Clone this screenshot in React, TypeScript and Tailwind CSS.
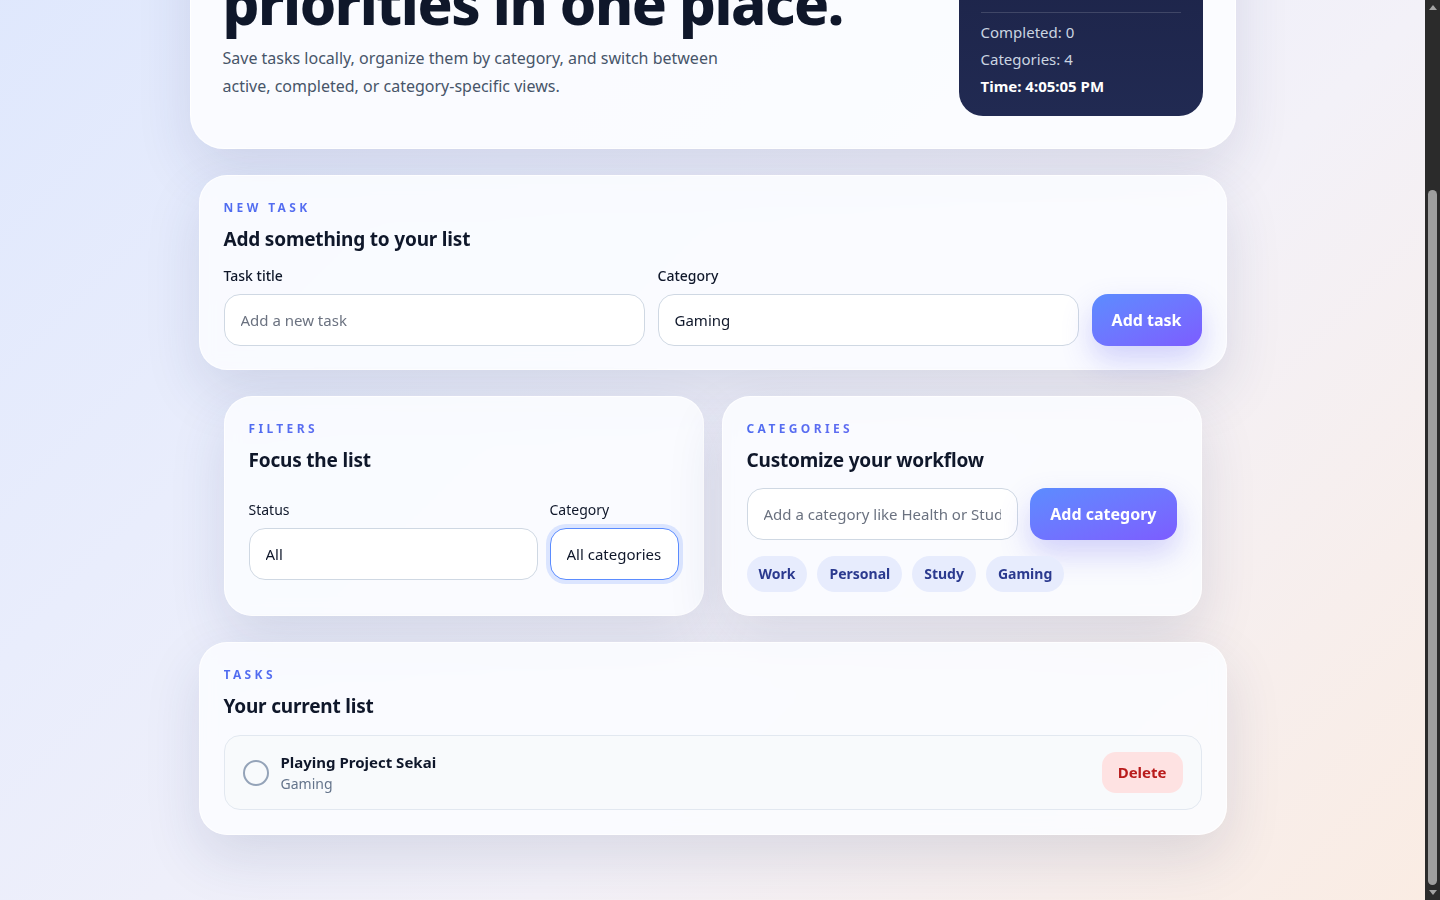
import React, { useEffect, useMemo, useRef, useState } from 'react';

type Task = { id: number; title: string; category: string; done: boolean };

const INITIAL_CATEGORIES = ['Work', 'Personal', 'Study', 'Gaming'];
const INITIAL_TASKS: Task[] = [{ id: 1, title: 'Playing Project Sekai', category: 'Gaming', done: false }];

const card =
  'rounded-[28px] border border-white/80 bg-[#fbfcff]/90 px-6 pt-6 shadow-[0_22px_55px_rgba(40,52,110,0.13)] backdrop-blur';
const field =
  'h-[52px] w-full rounded-2xl border border-[#cfd8e3] bg-white px-4 text-[15px] text-[#0f172a] outline-none placeholder:text-[#6b7280] focus:border-[#5b8cff] focus:ring-4 focus:ring-[#dbe5ff]';
const primaryBtn =
  'h-[52px] shrink-0 rounded-2xl bg-gradient-to-br from-[#5b8cff] to-[#7c5cff] px-5 text-base font-bold text-white shadow-[0_14px_30px_rgba(99,102,241,0.28)]';

function Eyebrow({ children }: { children: React.ReactNode }) {
  return (
    <p className="mb-[9px] bg-gradient-to-r from-[#4f6cf0] to-[#8b6cf6] bg-clip-text text-xs leading-4 font-bold tracking-[0.28em] text-transparent uppercase">
      {children}
    </p>
  );
}

function SectionTitle({ children }: { children: React.ReactNode }) {
  return <h2 className="text-[19px] leading-7 font-bold tracking-[-0.01em] text-[#0f172a]">{children}</h2>;
}

function Arrow({ up }: { up?: boolean }) {
  return (
    <div className="flex h-[15px] items-center justify-center">
      <svg width="8" height="5" viewBox="0 0 8 5">
        <polygon points={up ? '0,5 4,0 8,5' : '0,0 8,0 4,5'} fill="#a3a3a3" />
      </svg>
    </div>
  );
}

export default function App() {
  const [tasks, setTasks] = useState<Task[]>(INITIAL_TASKS);
  const [categories, setCategories] = useState<string[]>(INITIAL_CATEGORIES);
  const [title, setTitle] = useState('');
  const [taskCategory, setTaskCategory] = useState('Gaming');
  const [newCategory, setNewCategory] = useState('');
  const [status, setStatus] = useState('all');
  const [categoryFilter, setCategoryFilter] = useState('all');
  const [thumb, setThumb] = useState({ top: 0, size: 1 });
  const scroller = useRef<HTMLDivElement>(null);

  const syncThumb = () => {
    const el = scroller.current;
    if (!el) return;
    setThumb({ top: el.scrollTop / el.scrollHeight, size: el.clientHeight / el.scrollHeight });
  };

  useEffect(() => {
    const el = scroller.current;
    if (el) el.scrollTop = el.scrollHeight;
    syncThumb();
  }, []);

  const completed = tasks.filter((t) => t.done).length;

  const visible = useMemo(
    () =>
      tasks.filter((t) => {
        if (status === 'active' && t.done) return false;
        if (status === 'completed' && !t.done) return false;
        if (categoryFilter !== 'all' && t.category !== categoryFilter) return false;
        return true;
      }),
    [tasks, status, categoryFilter]
  );

  const addTask = () => {
    if (!title.trim()) return;
    setTasks((prev) => [...prev, { id: Date.now(), title: title.trim(), category: taskCategory, done: false }]);
    setTitle('');
  };

  const addCategory = () => {
    const name = newCategory.trim();
    if (!name || categories.includes(name)) return;
    setCategories((prev) => [...prev, name]);
    setNewCategory('');
  };

  return (
    <div className="flex h-screen font-['Noto_Sans','Open_Sans',sans-serif] text-[#0f172a]">
      <div ref={scroller} onScroll={syncThumb} className="flex-1 overflow-y-scroll">
        <div className="min-h-full bg-[linear-gradient(135deg,#dce6fd_0%,#e9edfc_35%,#f3f1f8_65%,#faece3_100%)] pt-10 pb-[65px]">
          <div className="mx-auto flex w-[1046px] flex-col gap-[26px]">
            {/* hero */}
            <header className="flex items-end justify-between gap-8 rounded-[34px] border border-white/80 bg-[#fbfcff]/95 p-8 shadow-[0_22px_55px_rgba(40,52,110,0.12)]">
              <div className="mb-4">
                <Eyebrow>Task dashboard</Eyebrow>
                <h1 className="mt-4 text-[58px] leading-[1.05] font-extrabold tracking-[-0.025em] text-[#0f172a]">
                  All your daily
                  <br />
                  priorities in one place.
                </h1>
                <p className="mt-[10px] max-w-[520px] text-base leading-7 text-[#475569]">
                  Save tasks locally, organize them by category, and switch between active, completed, or
                  category-specific views.
                </p>
              </div>
              <aside className="w-[244px] shrink-0 rounded-3xl bg-gradient-to-b from-[#1a2043] to-[#212a52] px-[22px] pt-4 pb-4 text-[15px] leading-[27px] text-[#cbd5e1]">
                <p className="text-xs leading-4 font-bold tracking-[0.25em] text-[#a5b4fc] uppercase">Snapshot</p>
                <p className="mt-2 mb-[6px] text-2xl leading-8 font-bold text-white">Today</p>
                <p>Total tasks: {tasks.length}</p>
                <p>Active: {tasks.length - completed}</p>
                <p>Filter: All</p>
                <div className="my-[6px] h-px bg-white/15" />
                <p>Completed: {completed}</p>
                <p>Categories: {categories.length}</p>
                <p className="font-bold text-white">Time: 4:05:05 PM</p>
              </aside>
            </header>

            {/* new task */}
            <section className={`${card} mx-[9px] pb-[23px]`}>
              <Eyebrow>New task</Eyebrow>
              <SectionTitle>Add something to your list</SectionTitle>
              <div className="mt-[13px] grid grid-cols-[1fr_1fr_auto] items-end gap-x-[13px]">
                <label className="flex flex-col gap-2">
                  <span className="text-sm leading-5 font-medium">Task title</span>
                  <input
                    className={field}
                    placeholder="Add a new task"
                    value={title}
                    onChange={(e) => setTitle(e.target.value)}
                  />
                </label>
                <label className="flex flex-col gap-2">
                  <span className="text-sm leading-5 font-medium">Category</span>
                  <select
                    className={`${field} appearance-none`}
                    value={taskCategory}
                    onChange={(e) => setTaskCategory(e.target.value)}
                  >
                    {categories.map((c) => (
                      <option key={c}>{c}</option>
                    ))}
                  </select>
                </label>
                <button className={primaryBtn} onClick={addTask}>
                  Add task
                </button>
              </div>
            </section>

            <div className="mx-[34px] grid grid-cols-2 gap-[18px]">
              {/* filters */}
              <section className={`${card} pb-[23px]`}>
                <Eyebrow>Filters</Eyebrow>
                <SectionTitle>Focus the list</SectionTitle>
                <div className="mt-[26px] grid grid-cols-[1fr_auto] gap-x-3">
                  <label className="flex flex-col gap-2">
                    <span className="text-sm leading-5">Status</span>
                    <select className={`${field} appearance-none`} value={status} onChange={(e) => setStatus(e.target.value)}>
                      <option value="all">All</option>
                      <option value="active">Active</option>
                      <option value="completed">Completed</option>
                    </select>
                  </label>
                  <label className="flex flex-col gap-2">
                    <span className="text-sm leading-5">Category</span>
                    <select
                      autoFocus
                      className={`${field} appearance-none`}
                      value={categoryFilter}
                      onChange={(e) => setCategoryFilter(e.target.value)}
                    >
                      <option value="all">All categories</option>
                      {categories.map((c) => (
                        <option key={c} value={c}>
                          {c}
                        </option>
                      ))}
                    </select>
                  </label>
                </div>
              </section>

              {/* categories */}
              <section className={`${card} pb-[23px]`}>
                <Eyebrow>Categories</Eyebrow>
                <SectionTitle>Customize your workflow</SectionTitle>
                <div className="mt-[14px] flex gap-3">
                  <input
                    className={field}
                    placeholder="Add a category like Health or Study"
                    value={newCategory}
                    onChange={(e) => setNewCategory(e.target.value)}
                  />
                  <button className={primaryBtn} onClick={addCategory}>
                    Add category
                  </button>
                </div>
                <div className="mt-4 flex flex-wrap gap-[10px]">
                  {categories.map((c) => (
                    <span
                      key={c}
                      className="flex h-9 items-center rounded-full bg-[#e7ecfd] px-3 text-sm font-bold text-[#2b3a8f]"
                    >
                      {c}
                    </span>
                  ))}
                </div>
              </section>
            </div>

            {/* task list */}
            <section className={`${card} mx-[9px] pb-6`}>
              <Eyebrow>Tasks</Eyebrow>
              <SectionTitle>Your current list</SectionTitle>
              <ul className="mt-[15px] flex flex-col gap-3">
                {visible.map((t) => (
                  <li
                    key={t.id}
                    className="flex h-[75px] items-center gap-3 rounded-2xl border border-[#e2e8f0] bg-[#f8fafc] px-[18px]"
                  >
                    <button
                      aria-label="Toggle task"
                      onClick={() => setTasks((prev) => prev.map((x) => (x.id === t.id ? { ...x, done: !x.done } : x)))}
                      className={`h-[26px] w-[26px] shrink-0 rounded-full border-2 ${
                        t.done ? 'border-[#6366f1] bg-[#6366f1]' : 'border-[#94a3b8] bg-transparent'
                      }`}
                    />
                    <div className="flex flex-1 flex-col">
                      <span className={`text-[15px] leading-[22px] font-bold ${t.done ? 'text-[#94a3b8] line-through' : ''}`}>
                        {t.title}
                      </span>
                      <span className="text-sm leading-[22px] text-[#64748b]">{t.category}</span>
                    </div>
                    <button
                      onClick={() => setTasks((prev) => prev.filter((x) => x.id !== t.id))}
                      className="h-[41px] rounded-[14px] bg-[#fee2e2] px-4 text-[15px] font-bold text-[#b91c1c]"
                    >
                      Delete
                    </button>
                  </li>
                ))}
              </ul>
            </section>
          </div>
        </div>
      </div>

      {/* scroll rail for the page */}
      <div aria-hidden className="flex w-[15px] shrink-0 flex-col bg-[#2b2b2b]">
        <Arrow up />
        <div className="relative flex-1">
          <div
            className="absolute left-[3px] w-[9px] rounded-full bg-[#9f9f9f]"
            style={{ top: `${thumb.top * 100}%`, height: `${thumb.size * 100}%` }}
          />
        </div>
        <Arrow />
      </div>
    </div>
  );
}
